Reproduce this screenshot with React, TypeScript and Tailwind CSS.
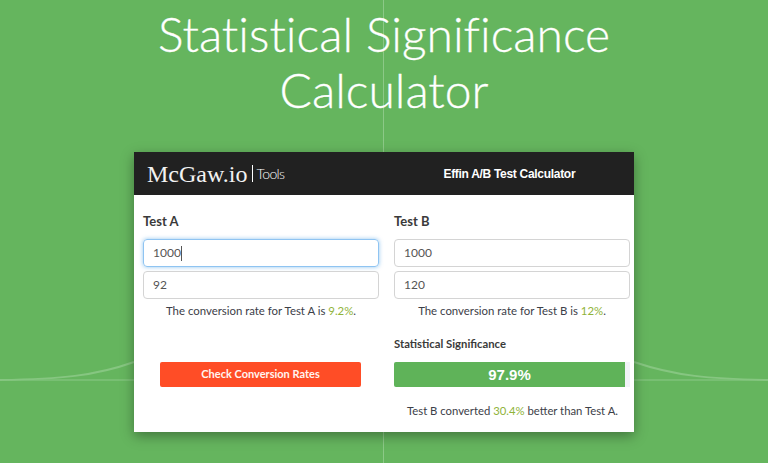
export default function App() {
  return (
    <div className="relative h-[463px] w-[768px] overflow-hidden bg-[#65b55e] font-['Lato',sans-serif]">
      {/* faint chart lines behind everything */}
      <svg className="absolute inset-0" width="768" height="463" viewBox="0 0 768 463" fill="none">
        <path d="M383.5 0V463" stroke="#8cc987" strokeWidth="1" />
        <path d="M0 380H768" stroke="#8cc987" strokeWidth="1" />
        <path d="M0 380C60 379 95 376 134 362" stroke="#86c681" strokeWidth="2" />
        <path d="M634 362C675 376 710 379 768 380" stroke="#86c681" strokeWidth="2" />
      </svg>

      <div className="relative flex flex-col items-center">
        <h1 className="mt-[6px] h-[146px] text-center text-[48px] leading-[56px] font-light text-white [font-variant-ligatures:none] [-webkit-text-stroke:0.3px_white]">
          Statistical Significance
          <br />
          Calculator
        </h1>

        <div className="h-[280px] w-[500px] bg-white shadow-[0_4px_12px_rgba(0,0,0,0.35)]">
          <div className="flex h-[43px] items-center bg-[#212121] pl-[13px]">
            <span className="font-['Liberation_Serif',serif] text-[24px] leading-none text-[#f2f2f2]">McGaw.io</span>
            <span className="ml-[5px] h-[17px] w-px bg-white" />
            <span className="ml-[3px] w-[187px] text-[14px] font-light tracking-[-0.6px] text-white">Tools</span>
            <span className="font-['Liberation_Sans',sans-serif] text-[12px] font-bold tracking-[-0.3px] whitespace-nowrap text-white">
              Effin A/B Test Calculator
            </span>
          </div>

          <div className="grid grid-cols-[236px_236px] gap-x-[15px] pl-[9px] text-[#3c4048]">
            <div>
              <p className="mt-[18px] h-[26px] text-[13px] leading-[17px] font-bold text-[#3a3a3a]">Test A</p>
              <div className="flex h-[28px] items-center rounded-[4px] border border-[#8fc4f2] pl-[9px] text-[12px] text-[#555555] shadow-[0_0_4px_rgba(102,175,233,0.7)]">
                1000<span className="h-[15px] w-px bg-[#555555]" />
              </div>
              <div className="mt-[4px] flex h-[28px] items-center rounded-[4px] border border-[#d4d4d4] pl-[9px] text-[12px] text-[#555555]">
                92
              </div>
              <p className="mt-[4px] text-center text-[11.4px] leading-[16px]">
                The conversion rate for Test A is <span className="text-[#8fb339]">9.2%</span>.
              </p>
              <button className="mt-[43px] ml-[17px] h-[25px] w-[201px] rounded-[2px] bg-[#ff4d26] text-[11px] font-bold text-[#fff5f0]">
                Check Conversion Rates
              </button>
            </div>

            <div>
              <p className="mt-[18px] h-[26px] text-[13px] leading-[17px] font-bold text-[#3a3a3a]">Test B</p>
              <div className="flex h-[28px] items-center rounded-[4px] border border-[#d4d4d4] pl-[9px] text-[12px] text-[#555555]">
                1000
              </div>
              <div className="mt-[4px] flex h-[28px] items-center rounded-[4px] border border-[#d4d4d4] pl-[9px] text-[12px] text-[#555555]">
                120
              </div>
              <p className="mt-[4px] text-center text-[11.4px] leading-[16px]">
                The conversion rate for Test B is <span className="text-[#8fb339]">12%</span>.
              </p>
              <p className="mt-[17px] h-[26px] text-[11.3px] leading-[16px] font-bold text-[#3a3a3a]">
                Statistical Significance
              </p>
              <div className="h-[25px] overflow-hidden rounded-l-[2px] bg-[#f1f3f7]">
                <div className="h-full w-[231px] bg-[#5fb359] text-center font-['Liberation_Sans',sans-serif] text-[15px] leading-[26px] font-bold text-white">
                  97.9%
                </div>
              </div>
              <p className="mt-[16px] pl-[1px] text-center text-[11.3px] leading-[16px]">
                Test B converted <span className="text-[#8fb339]">30.4%</span> better than Test A.
              </p>
            </div>
          </div>
        </div>
      </div>
    </div>
  );
}
